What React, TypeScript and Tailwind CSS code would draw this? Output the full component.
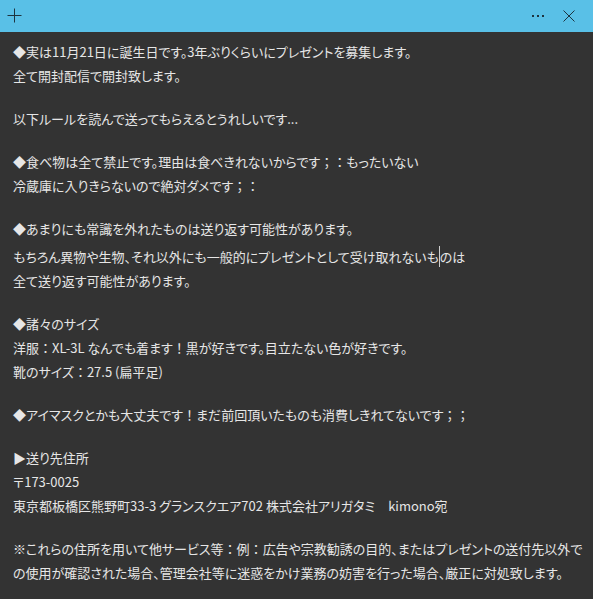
type Line = { text: string; cursorAt?: number } | null;

const lines: Line[] = [
  { text: "◆実は11月21日に誕生日です。3年ぶりくらいにプレゼントを募集します。" },
  { text: "全て開封配信で開封致します。" },
  null,
  { text: "以下ルールを読んで送ってもらえるとうれしいです..." },
  null,
  { text: "◆食べ物は全て禁止です。理由は食べきれないからです；：もったいない" },
  { text: "冷蔵庫に入りきらないので絶対ダメです；：" },
  null,
  { text: "◆あまりにも常識を外れたものは送り返す可能性があります。" },
  { text: "もちろん異物や生物、それ以外にも一般的にプレゼントとして受け取れないものは", cursorAt: 35 },
  { text: "全て送り返す可能性があります。" },
  null,
  { text: "◆諸々のサイズ" },
  { text: "洋服：XL-3L なんでも着ます！黒が好きです。目立たない色が好きです。" },
  { text: "靴のサイズ：27.5 (扁平足)" },
  null,
  { text: "◆アイマスクとかも大丈夫です！まだ前回頂いたものも消費しきれてないです；；" },
  null,
  { text: "▶送り先住所" },
  { text: "〒173-0025" },
  { text: "東京都板橋区熊野町33-3 グランスクエア702 株式会社アリガタミ　kimono宛" },
  null,
  { text: "※これらの住所を用いて他サービス等：例：広告や宗教勧誘の目的、またはプレゼントの送付先以外で" },
  { text: "の使用が確認された場合、管理会社等に迷惑をかけ業務の妨害を行った場合、厳正に対処致します。" },
];

// full-width punctuation keeps its full width, the rest is set proportionally
function Segment({ text }: { text: string }) {
  return (
    <>
      {text.split(/([：；！])/).map((part, i) =>
        /^[：；！]$/.test(part) ? (
          <span key={i} className="[font-feature-settings:normal]">
            {part}
          </span>
        ) : (
          part
        )
      )}
    </>
  );
}

function TitleBar() {
  return (
    <div className="flex h-8 items-center justify-between bg-[#59c0e7] text-[#1d3440]">
      <svg width="32" height="32" viewBox="0 0 32 32">
        <path d="M7.5 15.5h14M14.5 8.5v14" stroke="currentColor" strokeWidth="1" fill="none" />
      </svg>
      <div className="flex items-center">
        <svg width="32" height="32" viewBox="0 0 32 32">
          <rect x="11" y="15" width="2" height="2" fill="currentColor" />
          <rect x="16" y="15" width="2" height="2" fill="currentColor" />
          <rect x="21" y="15" width="2" height="2" fill="currentColor" />
        </svg>
        <svg width="40" height="32" viewBox="0 0 40 32">
          <path d="M10.5 10.5l11 11M21.5 10.5l-11 11" stroke="currentColor" strokeWidth="1" fill="none" />
        </svg>
      </div>
    </div>
  );
}

export default function App() {
  return (
    <div className="h-[599px] w-[593px] overflow-hidden bg-[#333333]">
      <TitleBar />
      <div
        className="pl-[13px] pt-2 text-[13px] leading-[24px] text-[#e6e6e6] [font-feature-settings:'palt']"
        style={{ fontFamily: '"Noto Sans CJK JP", "Noto Sans", sans-serif' }}
      >
        {lines.map((line, i) =>
          line === null ? (
            <div key={i} className="h-[19px]" />
          ) : (
            <div key={i} className="whitespace-nowrap">
              {line.cursorAt !== undefined ? (
                <>
                  <Segment text={line.text.slice(0, line.cursorAt)} />
                  <span className="inline-block h-[21px] w-px translate-y-[5px] bg-[#cfcfcf] align-baseline" />
                  <Segment text={line.text.slice(line.cursorAt)} />
                </>
              ) : (
                <Segment text={line.text} />
              )}
            </div>
          )
        )}
      </div>
    </div>
  );
}
